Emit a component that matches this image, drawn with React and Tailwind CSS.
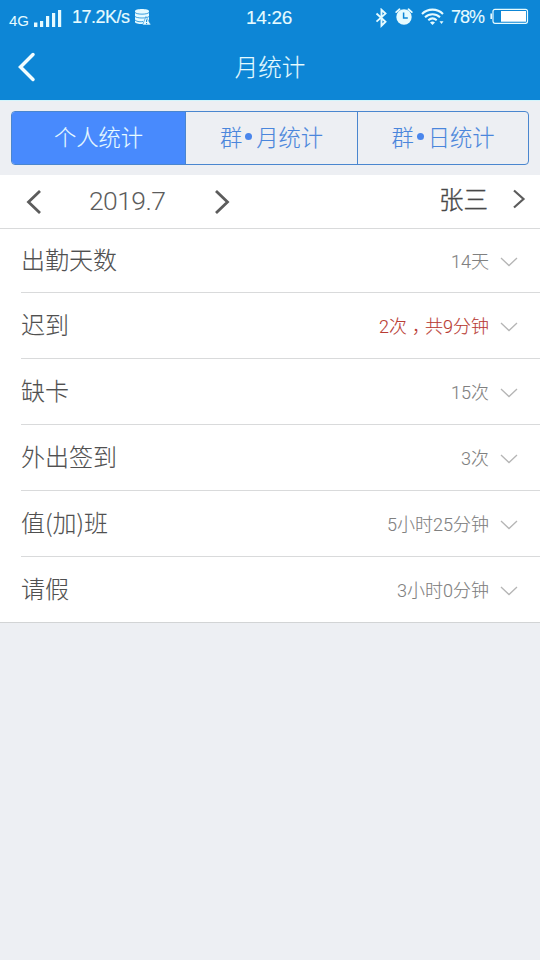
const CJK = "font-['Noto_Sans_CJK_SC',sans-serif]";

const rows = [
  { label: '出勤天数', value: '14天' },
  { label: '迟到', value: '2次，共9分钟', late: true },
  { label: '缺卡', value: '15次' },
  { label: '外出签到', value: '3次' },
  { label: '值(加)班', value: '5小时25分钟' },
  { label: '请假', value: '3小时0分钟' },
];

function Chevron({ w, h, points, stroke, cap = 'butt', className = '' }) {
  return (
    <svg width={w} height={h} viewBox={`0 0 ${w} ${h}`} fill="none" stroke="currentColor" strokeWidth={stroke} strokeLinecap={cap} className={`shrink-0 ${className}`}>
      <polyline points={points} />
    </svg>
  );
}

function StatusBar() {
  return (
    <div className="flex h-[34px] text-[#e6fbff] font-['Liberation_Sans',sans-serif]">
      <div className="flex w-[246px] pl-[9px]">
        <span className="mt-[12px] w-[25px] text-[15px] leading-[18px]">4G</span>
        <svg width="28" height="18" viewBox="0 0 28 18" fill="currentColor" className="mt-[10px]">
          <rect x="0" y="12.5" width="3.4" height="4.5" />
          <rect x="6" y="11" width="3.2" height="6" />
          <rect x="12" y="6" width="3.2" height="11" />
          <rect x="18" y="3" width="3.2" height="14" />
          <rect x="24" y="0" width="3.2" height="17" />
        </svg>
        <span className="mt-[7px] ml-[10px] w-[62px] text-[18px] leading-[20px] tracking-[-0.5px] [-webkit-text-stroke:0.15px_currentColor]">17.2K/s</span>
        <svg width="18" height="18" viewBox="0 0 18 18" className="mt-[8px]">
          <path d="M1 3.2C1 .4 15 .4 15 3.2V14c0 2.8-14 2.8-14 0z" fill="#e6fbff" />
          <path d="M1 4.5c2 2.2 12 2.2 14 0M1 8.5c2 2 12 2 14 0M1 12c2 2 6 2 8 1.5" fill="none" stroke="#0d86d6" strokeWidth=".8" />
          <path d="M12 8.5l5 8.5H8.5z" fill="#e6fbff" stroke="#0d86d6" strokeWidth=".6" />
          <path d="M12.6 11.5v2.5M12.6 15v1.2" stroke="#0d86d6" strokeWidth="1" />
        </svg>
      </div>
      <span className="mt-[7px] w-[128px] text-[19px] leading-[21px] tracking-[-0.3px] [-webkit-text-stroke:0.1px_currentColor]">14:26</span>
      <svg width="13" height="20" viewBox="0 0 13 20" fill="none" stroke="currentColor" strokeWidth="1.9" className="mt-[8px] ml-[1px]">
        <path d="M1.5 5.5l9 8.2-4 4V1.8l4 3.8-9 8" />
      </svg>
      <svg width="18" height="18" viewBox="0 0 18 18" className="mt-[8px] ml-[7px]">
        <circle cx="9" cy="9" r="7.7" fill="#e6fbff" />
        <path d="M1.2 4.1l3.300-2.800M16.800 4.100l-3.300-2.800" stroke="#e6fbff" strokeWidth="1.800" strokeLinecap="round" />
        <path d="M8.600 4.500V10H12.800" fill="none" stroke="#0d86d6" strokeWidth="1.500" />
      </svg>
      <svg width="23" height="18" viewBox="0 0 23 18" fill="none" stroke="currentColor" strokeWidth="2.1" className="mt-[8px] ml-[8px]">
        <path d="M1 6c5.800-5.800 15.200-5.800 21 0M4 9.300c4.400-4 10.600-4 15 0M7.300 12.300c2.600-2.300 5.800-2.300 8.400 0" />
        <path d="M9 14.500c1.500-1.200 3.500-1.200 5 0L11.500 17z" fill="currentColor" stroke="none" />
        <path d="M18.500 13.300h4L20.500 16z" fill="currentColor" stroke="none" />
      </svg>
      <span className="mt-[7px] ml-[7px] w-[38px] text-[18px] leading-[20px] tracking-[-1px] [-webkit-text-stroke:0.1px_currentColor]">78%</span>
      <svg width="40" height="16" viewBox="0 0 40 16" className="mt-[8px]">
        <path d="M2.200 5.500v5.500" stroke="#e6fbff" strokeWidth="1.600" />
        <rect x="4" y="1.300" width="34.500" height="14" rx="2" fill="none" stroke="#e6fbff" strokeWidth="1.200" />
        <rect x="12" y="3" width="25" height="10.700" fill="white" />
      </svg>
    </div>
  );
}

function Tab({ prefix, children, className }) {
  return (
    <div className={`flex items-center justify-center pb-[4px] text-[22.3px] font-light leading-[30px] [-webkit-text-stroke:0.1px_currentColor] ${className}`}>
      {prefix && (
        <>
          <span>{prefix}</span>
          <i className="mr-[4px] ml-[3px] size-[7px] rounded-full bg-[#4a86ec]" />
        </>
      )}
      <span>{children}</span>
    </div>
  );
}

// Numbers and CJK text share one baseline; the comma sits in the middle of its cell.
function Value({ text, late }) {
  const [head, tail] = text.split('，');
  return (
    <span className={`ml-auto pt-[2px] font-['Roboto','Noto_Sans_CJK_SC',sans-serif] text-[18px] font-light leading-[26px] [-webkit-text-stroke:0.1px_currentColor] ${late ? 'text-[#b93c34]' : 'text-[#808080]'}`}>
      {head}
      {tail && <span className="pl-[5px] tracking-[-5px]">，</span>}
      {tail}
    </span>
  );
}

export default function App() {
  return (
    <div className={`flex h-[960px] w-[540px] flex-col overflow-hidden bg-[#edeff3] ${CJK}`}>
      <header className="h-[100px] shrink-0 bg-[#0d86d6]">
        <StatusBar />
        <div className="grid h-[66px] grid-cols-[52px_1fr_52px] items-center">
          <Chevron w={20} h={30} points="16,2.500 3.500,15 16,27.500" stroke={3.500} cap="round" className="ml-[17px] text-[#f2fdff]" />
          <h1 className="pb-[3px] text-center text-[23.500px] font-light leading-[34px] text-[#e6fbff] [-webkit-text-stroke:0.1px_currentColor]">月统计</h1>
        </div>
      </header>

      <div className="h-[75px] shrink-0 border-t border-[#d3f5fc] px-[11px] pt-[10px]">
        <div className="grid h-[54px] grid-cols-[174px_172px_1fr] overflow-hidden rounded-[4px] border border-[#4a86cf] text-[#4a86dc]">
          <Tab className="border-r border-[#4a86cf] bg-[#488afd] text-[#e8fbff]">个人统计</Tab>
          <Tab prefix="群" className="border-r border-[#4a86cf]">月统计</Tab>
          <Tab prefix="群">日统计</Tab>
        </div>
      </div>

      <div className="flex h-[54px] shrink-0 items-center border-b border-[#d9dadb] bg-white text-[#5c5c5c]">
        <Chevron w={16} h={24} points="14,1 2.500,12 14,23" stroke={2.800} className="ml-[26px]" />
        <span className="ml-[47px] w-[125px] pb-[1px] font-['Roboto',sans-serif] text-[26.500px] font-light leading-[32px] tracking-[-0.600px]">2019.7</span>
        <Chevron w={16} h={24} points="2,1 13.500,12 2,23" stroke={2.800} />
        <span className="ml-auto pb-[6px] text-[24.500px] font-light leading-[34px] text-[#484848] [-webkit-text-stroke:0.35px_currentColor]">张三</span>
        <Chevron w={14} h={20} points="2,1.500 11.500,10 2,18.500" stroke={2.200} className="mr-[14px] mb-[5px] ml-[24px]" />
      </div>

      <ul className="shrink-0 border-b border-[#d2d4d5] bg-white">
        {rows.map((row, i) => (
          <li
            key={row.label}
            className={`ml-[21px] flex items-center justify-between pr-[22px] ${i === 0 ? 'h-[64px]' : i === rows.length - 1 ? 'h-[65px]' : 'h-[66px]'} ${i === rows.length - 1 ? '' : 'border-b border-[#d9dadb]'}`}
          >
            <span className="pb-[3px] text-[24px] font-light leading-[34px] text-[#505050] [-webkit-text-stroke:0.1px_currentColor]">{row.label}</span>
            <Value text={row.value} late={row.late} />
            <Chevron w={18} h={10} points="1,1 9,8.500 17,1" stroke={1.300} className="mt-[2px] ml-[11px] text-[#b5b5b5]" />
          </li>
        ))}
      </ul>
    </div>
  );
}
